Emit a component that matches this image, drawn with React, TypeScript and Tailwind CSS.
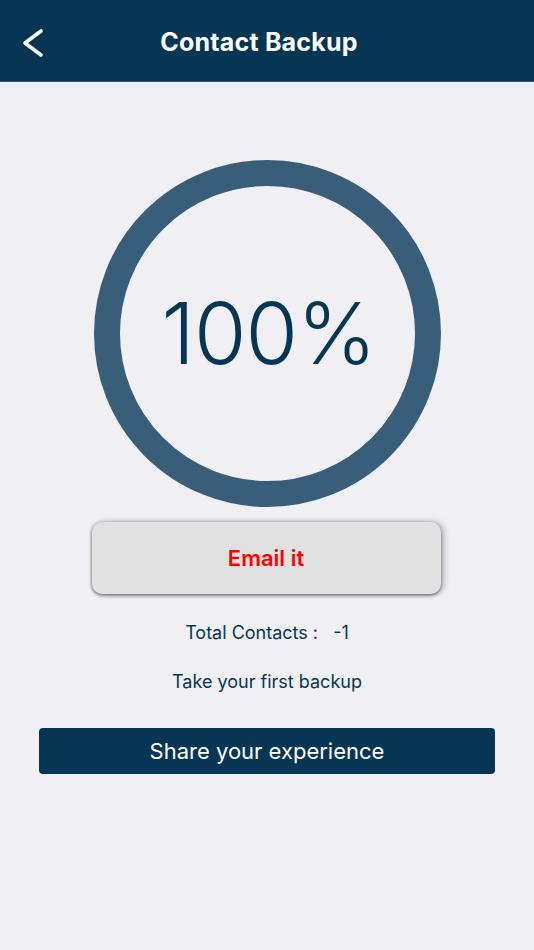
export default function App() {
  return (
    <div className="w-[534px] h-[950px] bg-[#efeff4] flex flex-col font-['Liberation_Sans',Arial,sans-serif]">
      <header className="h-[82px] bg-[#073655] border-b border-[#2e5873] flex items-center relative">
        <button className="absolute left-[20px] top-[28px] text-white">
          <svg width="26" height="30" viewBox="0 0 26 30" fill="none">
            <polyline points="21,3 5,15 21,27" stroke="currentColor" strokeWidth="3.6" strokeLinecap="round" strokeLinejoin="round" />
          </svg>
        </button>
        <h1 className="w-full text-center text-white text-[25px] font-bold font-['Inter',sans-serif] tracking-[0.2px] pt-[5px] pr-[16px]">
          Contact Backup
        </h1>
      </header>

      <main className="flex flex-col items-center">
        <div className="mt-[78px] ml-[1px] w-[347px] h-[347px] rounded-full border-[26px] border-[#395e79] flex items-center justify-center">
          <span className="text-[85px] font-light text-[#073655] font-['Inter',sans-serif] leading-none tracking-[-1px] ml-[2px]">
            100%
          </span>
        </div>

        <button className="mt-[15px] mr-[2px] w-[349px] h-[72px] rounded-[10px] bg-[#e1e1e1] shadow-[0_2px_3px_rgba(0,0,0,0.35),3px_0_6px_rgba(0,0,0,0.25),-1px_0_3px_rgba(0,0,0,0.2)] text-[#ff0000] text-[22px] font-semibold font-['Inter',sans-serif]">
          Email it
        </button>

        <p className="mt-[25px] text-[18px] text-[#073655] font-['Inter',sans-serif] whitespace-pre">
          Total Contacts :   -1
        </p>
        <p className="mt-[22px] text-[18px] text-[#073655] font-['Inter',sans-serif]">
          Take your first backup
        </p>

        <button className="mt-[33px] w-[456px] h-[46px] rounded-[4px] bg-[#073655] text-white text-[22px] font-['Inter',sans-serif]">
          Share your experience
        </button>
      </main>
    </div>
  );
}
